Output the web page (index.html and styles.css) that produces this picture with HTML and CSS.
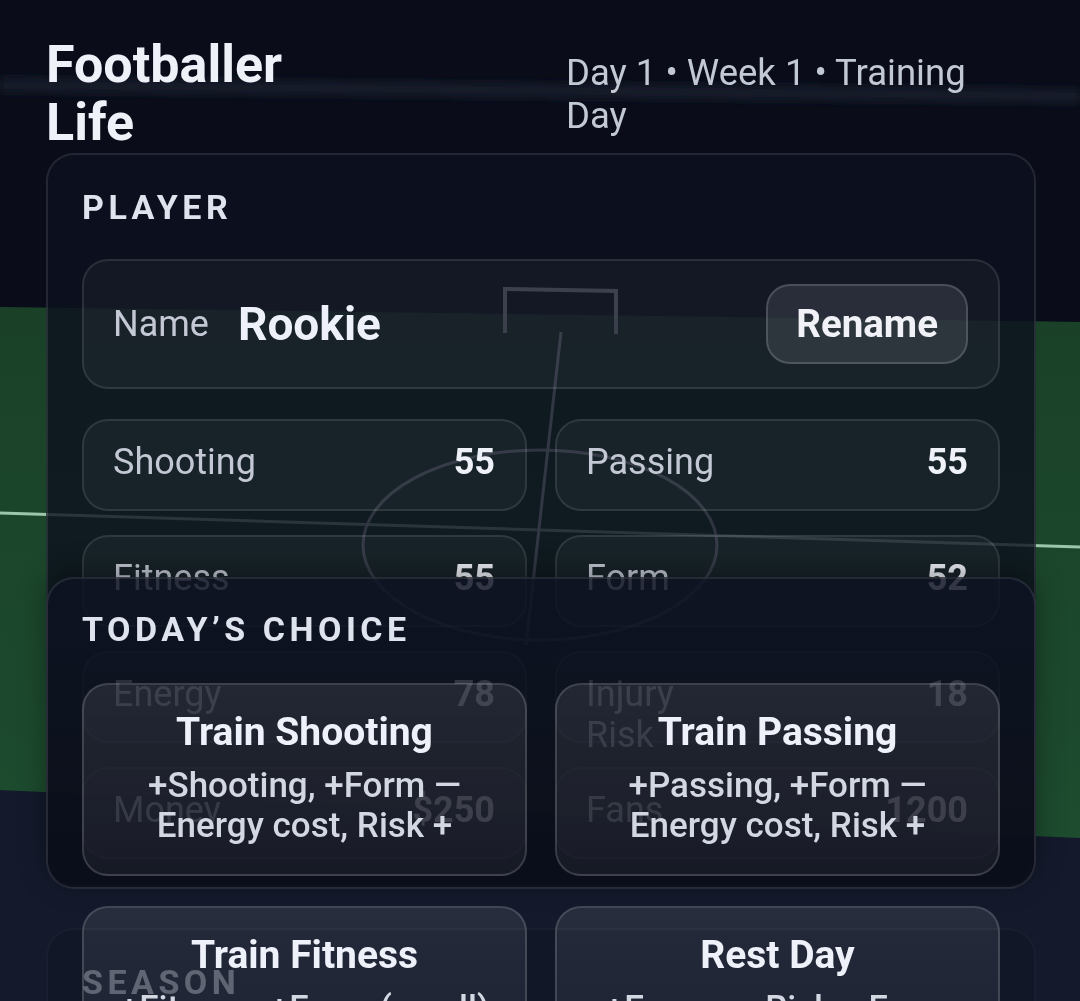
FILE: index.html
```html
<!DOCTYPE html>
<html lang="en">
<head>
<meta charset="utf-8">
<title>Footballer Life</title>
<link rel="stylesheet" href="styles.css">
</head>
<body>
<svg class="pitch" viewBox="0 0 1080 1001" preserveAspectRatio="none" aria-hidden="true">
  <defs>
    <linearGradient id="grass" x1="0" y1="0" x2="0" y2="1">
      <stop offset="0" stop-color="#1a4128"/>
      <stop offset="1" stop-color="#1d4c2f"/>
    </linearGradient>
    <filter id="soft" x="-5%" y="-200%" width="110%" height="500%"><feGaussianBlur stdDeviation="4"/></filter>
  </defs>
  <rect x="0" y="0" width="1080" height="1001" fill="#0a0d19"/>
  <line x1="0" y1="85" x2="1080" y2="96" stroke="#171b29" stroke-width="14" filter="url(#soft)"/>
  <polygon points="0,780 1080,828 1080,1001 0,1001" fill="#141a2c"/>
  <polygon points="0,307 1080,322 1080,838 0,790" fill="url(#grass)"/>
  <line x1="0" y1="513" x2="1080" y2="547" stroke="#b3dcc2" stroke-width="3" opacity="0.85"/>
  <ellipse cx="540" cy="545" rx="177" ry="95" fill="none" stroke="#c9d0da" stroke-width="3" opacity="0.9"/>
  <polyline points="505,333 505,289 616,291 616,334" fill="none" stroke="#d2d8e2" stroke-width="4"/>
  <line x1="561" y1="332" x2="526" y2="645" stroke="#c9d0da" stroke-width="3"/>
</svg>

<div class="app">
  <header class="topbar">
    <h1 class="brand">Footballer Life</h1>
    <div class="meta">Day 1 • Week 1 • Training Day</div>
  </header>

  <main class="panels">
    <section class="panel panel-player">
      <h2 class="panel-title">PLAYER</h2>
      <div class="name-row">
        <span class="name-label">Name</span>
        <span class="name-value">Rookie</span>
        <button class="btn-rename" type="button">Rename</button>
      </div>
      <div class="stats">
        <div class="stat"><span class="stat-label">Shooting</span><span class="stat-value">55</span></div>
        <div class="stat"><span class="stat-label">Passing</span><span class="stat-value">55</span></div>
        <div class="stat"><span class="stat-label">Fitness</span><span class="stat-value">55</span></div>
        <div class="stat"><span class="stat-label">Form</span><span class="stat-value">52</span></div>
        <div class="stat"><span class="stat-label">Energy</span><span class="stat-value">78</span></div>
        <div class="stat"><span class="stat-label">Injury Risk</span><span class="stat-value">18</span></div>
        <div class="stat"><span class="stat-label">Money</span><span class="stat-value">$250</span></div>
        <div class="stat"><span class="stat-label">Fans</span><span class="stat-value">1200</span></div>
      </div>
    </section>

    <section class="panel panel-choice">
      <h2 class="panel-title panel-title-choice">TODAY’S CHOICE</h2>
      <div class="choices">
        <button class="choice" type="button">
          <span class="choice-title">Train Shooting</span>
          <span class="choice-desc">+Shooting, +Form — Energy cost, Risk +</span>
        </button>
        <button class="choice" type="button">
          <span class="choice-title">Train Passing</span>
          <span class="choice-desc">+Passing, +Form — Energy cost, Risk +</span>
        </button>
        <button class="choice" type="button">
          <span class="choice-title">Train Fitness</span>
          <span class="choice-desc">+Fitness, +Form (small) — Energy cost</span>
        </button>
        <button class="choice" type="button">
          <span class="choice-title">Rest Day</span>
          <span class="choice-desc">+Energy, −Risk, −Form</span>
        </button>
      </div>
    </section>

    <section class="panel panel-season">
      <h2 class="panel-title">SEASON</h2>
      <div class="stats">
        <div class="stat"><span class="stat-label">Matches</span><span class="stat-value">0</span></div>
        <div class="stat"><span class="stat-label">Goals</span><span class="stat-value">0</span></div>
      </div>
    </section>
  </main>
</div>
</body>
</html>
```

FILE: styles.css
```css
* {
  box-sizing: border-box;
}

html, body {
  margin: 0;
  padding: 0;
}

body {
  background: #0a0d19;
  font-family: "Roboto", "Noto Sans", "Liberation Sans", sans-serif;
  color: #eef0f8;
  overflow: hidden;
  height: 1001px;
}

.pitch {
  position: fixed;
  inset: 0;
  width: 100%;
  height: 100%;
  z-index: 0;
  display: block;
}

.app {
  position: relative;
  z-index: 1;
  padding: 36px 44px 0 46px;
}

/* Header */
.topbar {
  display: flex;
  justify-content: space-between;
  align-items: center;
  padding-right: 20px;
}

.brand {
  margin: 0;
  width: 270px;
  font-size: 52px;
  line-height: 58px;
  font-weight: 700;
  color: #eff1f9;
}

.meta {
  width: 450px;
  font-size: 36.5px;
  line-height: 43px;
  font-weight: 400;
  color: #c3c8d5;
}

/* Panels */
.panels {
  display: grid;
  grid-template-rows: 424px 351px auto;
  margin-top: 1px;
}

.panel {
  position: relative;
  border: 2px solid rgba(255, 255, 255, 0.1);
  border-radius: 28px;
  background: rgba(12, 16, 30, 0.8);
  padding: 32px 34px 34px;
}

.panel-player {
  z-index: 1;
  align-self: start;
  padding-bottom: 26px;
}

.panel-choice {
  z-index: 3;
  height: 312px;
  padding-top: 30px;
  background: linear-gradient(180deg, rgba(14, 18, 34, 0.84), rgba(11, 14, 26, 0.84));
  box-shadow: 0 -6px 28px rgba(0, 0, 0, 0.35);
}

.panel-season {
  z-index: 2;
  opacity: 0.32;
}

.panel-title {
  margin: 0 0 31px;
  font-size: 34px;
  line-height: 1.2;
  font-weight: 700;
  letter-spacing: 4.5px;
  color: #dfe3ee;
}

.panel-title-choice {
  margin-bottom: 33px;
}

/* Name row */
.name-row {
  display: flex;
  align-items: center;
  gap: 29px;
  height: 130px;
  padding: 0 30px 0 29px;
  border: 2px solid rgba(255, 255, 255, 0.1);
  border-radius: 26px;
  background: rgba(255, 255, 255, 0.04);
}

.name-label {
  font-size: 36px;
  color: #c3c8d4;
}

.name-value {
  font-size: 46px;
  font-weight: 700;
  color: #eef1f9;
}

.btn-rename {
  margin-left: auto;
  height: 80px;
  padding: 0 28px;
  border: 2px solid rgba(255, 255, 255, 0.16);
  border-radius: 24px;
  background: rgba(255, 255, 255, 0.09);
  font-family: inherit;
  font-size: 38.5px;
  font-weight: 700;
  color: #f0f2f8;
}

/* Stats */
.stats {
  display: grid;
  grid-template-columns: 1fr 1fr;
  gap: 24px 28px;
  margin-top: 30px;
}

.stat {
  display: flex;
  justify-content: space-between;
  align-items: flex-start;
  height: 92px;
  padding: 21px 30px 0 29px;
  border: 2px solid rgba(255, 255, 255, 0.1);
  border-radius: 26px;
  background: rgba(255, 255, 255, 0.04);
  font-size: 36px;
  line-height: 41px;
}

.stat-label {
  max-width: 40%;
  color: #c3c8d4;
}

.stat-value {
  font-weight: 700;
  color: #eef1f8;
}

/* Choices */
.choices {
  display: grid;
  grid-template-columns: 1fr 1fr;
  gap: 30px 28px;
}

.choice {
  display: flex;
  flex-direction: column;
  align-items: center;
  gap: 11px;
  padding: 24px 20px 28px;
  border: 2px solid rgba(255, 255, 255, 0.15);
  border-radius: 26px;
  background: linear-gradient(180deg, rgba(255, 255, 255, 0.085), rgba(255, 255, 255, 0.05));
  font-family: inherit;
  text-align: center;
  color: #eef1fa;
}

.choice-title {
  font-size: 39px;
  line-height: 46px;
  font-weight: 700;
  color: #eef1fa;
}

.choice-desc {
  font-size: 35px;
  line-height: 40px;
  font-weight: 500;
  color: #d3d7e2;
}
```
